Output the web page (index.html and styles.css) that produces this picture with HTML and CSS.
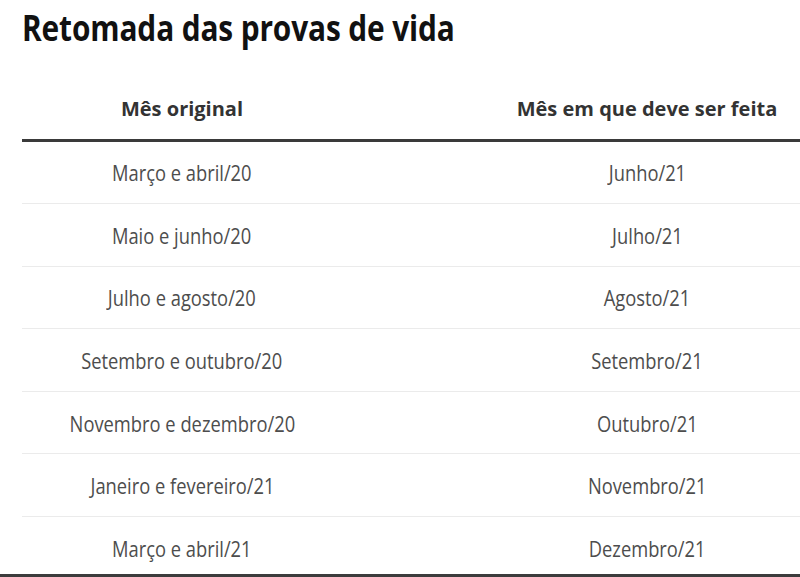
FILE: index.html
```html
<!DOCTYPE html>
<html lang="pt-BR">
<head>
<meta charset="utf-8">
<title>Retomada das provas de vida</title>
<link rel="stylesheet" href="styles.css">
</head>
<body>
<div class="viewport">
  <div class="page">
    <h1 class="title"><span class="narrow-title">Retomada das provas de vida</span></h1>
    <table class="schedule">
      <thead>
        <tr><th class="col-a">Mês original</th><th class="col-b">Mês em que deve ser feita</th></tr>
      </thead>
      <tbody>
        <tr><td><span class="cell">Março e abril/20</span></td><td><span class="cell">Junho/21</span></td></tr>
        <tr><td><span class="cell">Maio e junho/20</span></td><td><span class="cell">Julho/21</span></td></tr>
        <tr><td><span class="cell">Julho e agosto/20</span></td><td><span class="cell">Agosto/21</span></td></tr>
        <tr><td><span class="cell">Setembro e outubro/20</span></td><td><span class="cell">Setembro/21</span></td></tr>
        <tr><td><span class="cell">Novembro e dezembro/20</span></td><td><span class="cell">Outubro/21</span></td></tr>
        <tr><td><span class="cell">Janeiro e fevereiro/21</span></td><td><span class="cell">Novembro/21</span></td></tr>
        <tr class="last"><td><span class="cell">Março e abril/21</span></td><td><span class="cell">Dezembro/21</span></td></tr>
      </tbody>
    </table>
  </div>
  <div class="bottom-bar"></div>
</div>
</body>
</html>
```
FILE: styles.css
```css
html, body {
  margin: 0;
  padding: 0;
  background: #ffffff;
}
body {
  width: 800px;
  height: 577px;
  overflow: hidden;
  font-family: "Open Sans", "Noto Sans", sans-serif;
}
.viewport {
  width: 800px;
  height: 577px;
  overflow: hidden;
  display: flex;
  flex-direction: column;
}
.page {
  padding-left: 22px;
  flex: 0 0 auto;
}
.title {
  margin: 0;
  padding-top: 7px;
  font-size: 35px;
  line-height: 42px;
  font-weight: 700;
  color: #111111;
  white-space: nowrap;
}
.narrow-title {
  display: inline-block;
  transform: scaleX(0.853);
  transform-origin: 0 50%;
  letter-spacing: -0.15px;
}
.schedule {
  border-collapse: collapse;
  table-layout: fixed;
  width: 930px;
}
.col-a { width: 320px; }
.col-b { width: 610px; }
.schedule th {
  padding: 46px 0 15.5px;
  font-size: 20px;
  line-height: 28px;
  font-weight: 700;
  color: #333333;
  text-align: center;
  border-bottom: 3px solid #3a3a3a;
  white-space: nowrap;
}
.schedule td {
  padding: 15.8px 0 15.8px;
  font-size: 22px;
  line-height: 30px;
  font-weight: 400;
  color: #4d4d4d;
  text-align: center;
  border-bottom: 1px solid #ebebeb;
  white-space: nowrap;
}
.cell {
  display: inline-block;
  transform: scaleX(0.833);
  transform-origin: 50% 50%;
}
.schedule tr.last td {
  border-bottom: none;
  padding-bottom: 11.6px;
}
.bottom-bar {
  height: 3px;
  background: #3c3c3c;
  flex: 0 0 auto;
}
```
